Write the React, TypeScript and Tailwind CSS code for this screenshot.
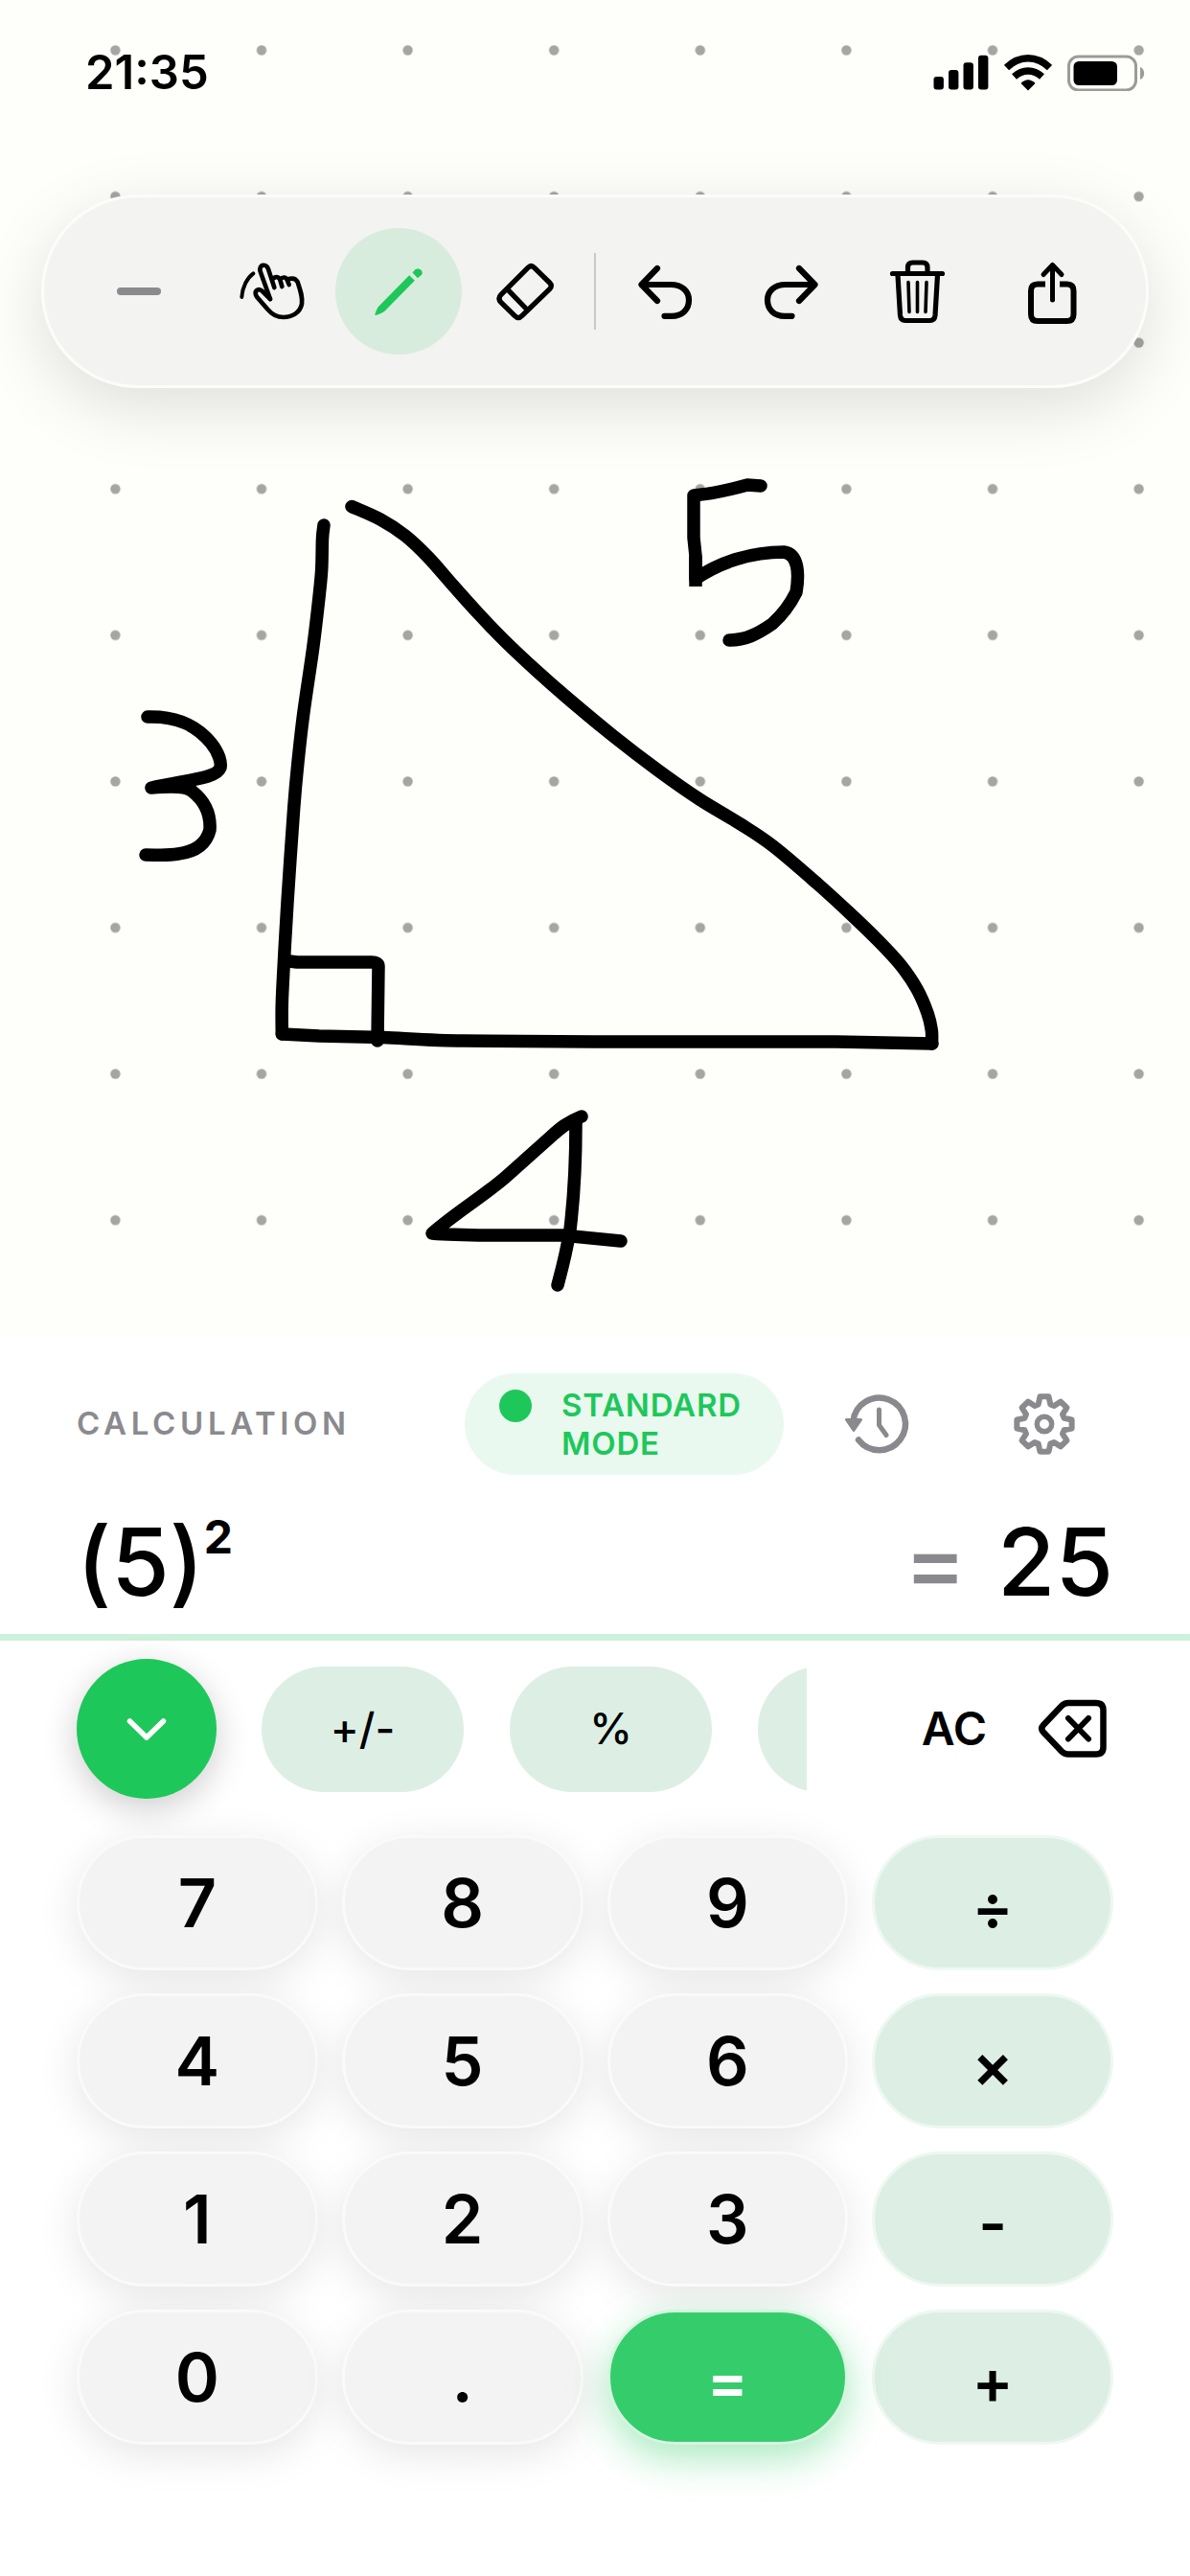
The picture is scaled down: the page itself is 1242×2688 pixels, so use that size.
import type { ReactNode } from 'react';

const GRID = 152.6;
const DOT_X = 120.4;
const DOT_Y = 52.4;

type Point = [number, number];

// Catmull-Rom spline through the sampled pen positions
function smooth(points: Point[]) {
  let d = `M${points[0][0]} ${points[0][1]}`;
  for (let i = 0; i < points.length - 1; i++) {
    const p0 = points[i - 1] ?? points[i];
    const p1 = points[i];
    const p2 = points[i + 1];
    const p3 = points[i + 2] ?? p2;
    d += `C${p1[0] + (p2[0] - p0[0]) / 6} ${p1[1] + (p2[1] - p0[1]) / 6} ${p2[0] - (p3[0] - p1[0]) / 6} ${p2[1] - (p3[1] - p1[1]) / 6} ${p2[0]} ${p2[1]}`;
  }
  return d;
}

const LEFT_SIDE: Point[] = [
  [338, 548], [336.5, 562], [335.7, 594], [333, 623], [326.7, 676], [316.7, 745], [311, 795],
  [306.7, 843], [300, 941], [296.7, 998], [294.3, 1047], [294.3, 1079],
];

const HYPOTENUSE: Point[] = [
  [367, 528.5], [397, 542], [423, 559], [447, 581.5], [473, 611], [500, 641], [527, 669], [560, 700],
  [593, 729], [640, 768], [687, 804], [730, 834], [773, 860], [807, 883], [853, 922], [887, 953],
  [917, 982], [940, 1007], [957, 1032], [968, 1057], [972.3, 1075], [972.5, 1089],
];

function Board() {
  return (
    <svg className="absolute inset-0 h-full w-full" aria-hidden="true">
      <defs>
        <pattern id="dots" x={DOT_X - GRID / 2} y={DOT_Y - GRID / 2} width={GRID} height={GRID} patternUnits="userSpaceOnUse">
          <circle cx={GRID / 2} cy={GRID / 2} r="5.2" fill="#a5a5a4" />
        </pattern>
      </defs>
      <rect width="100%" height="100%" fill="url(#dots)" />
      <g fill="none" stroke="#000" strokeWidth="13.5" strokeLinecap="round" strokeLinejoin="round">
        {/* triangle */}
        <path d={smooth(LEFT_SIDE)} />
        <path d="M294.3 1079L333 1081L400 1082.5C430 1084 455 1086 483 1086L620 1087H873L973 1089" />
        <path d={smooth(HYPOTENUSE)} />
        {/* right angle mark */}
        <path d="M302 1003L310 1004H388Q395 1004 395 1008L394 1086" />
        {/* 3 */}
        <path d="M154 748C185 747 205 757 220 775C229 786 231 796 230 801C226 812 200 813 158 822C182 820 195 820 201 826C215 837 220 850 219 866C215 882 202 889 186 891C175 893 165 892 152 892" />
        {/* 5 */}
        <path d="M794 507L780 506C762 511 745 515 724 517V561L726 580V604C752 586 785 576 818 576C834 578 834 600 831 618C824 632 815 643 806 651C790 662 778 668 761 668" />
        <path d="M726 580V612" strokeLinecap="butt" />
        {/* 4 */}
        <path d="M607 1165C592 1171 585 1177 575 1186L528 1228C505 1248 475 1266 451 1287C485 1290 520 1289 587 1289L648 1295" />
        <path d="M601 1172C601 1210 599 1250 595 1283C591 1308 586 1326 582 1341" />
      </g>
    </svg>
  );
}

function SignalIcon() {
  return (
    <svg width="58" height="38" viewBox="973 57 58 38">
      <rect x="973.5" y="80" width="10.4" height="13.5" rx="3" />
      <rect x="989" y="73" width="10.4" height="20.5" rx="3" />
      <rect x="1004.5" y="65.3" width="10.4" height="28.2" rx="3" />
      <rect x="1020" y="57.7" width="10.4" height="35.8" rx="3" />
    </svg>
  );
}

function WifiIcon() {
  return (
    <svg width="50" height="38" viewBox="1047 56 50 38" fill="none" stroke="#000" strokeWidth="7.5">
      <path d="M1049.5 69.5C1063 56.5 1081 56.5 1094.5 69.5" />
      <path d="M1057.5 79C1066.5 71 1077.5 71 1086.5 79" />
      <path d="M1064.5 86Q1072 78.5 1079.5 86L1072 93.5Z" fill="#000" stroke="none" />
    </svg>
  );
}

function BatteryIcon() {
  return (
    <svg width="81" height="38" viewBox="1114 56 81 38">
      <rect x="1115.5" y="58" width="70" height="35" rx="10" fill="none" stroke="#9b9b98" strokeWidth="3" />
      <rect x="1120.5" y="63" width="45.5" height="25" rx="5.5" />
      <path d="M1190 69C1195.5 71 1195.5 80 1190 82Z" fill="#9b9b98" />
    </svg>
  );
}

function HandIcon() {
  return (
    <svg width="74" height="64" viewBox="50 64 220 192" fill="none" stroke="#000" strokeWidth="14" strokeLinecap="round" strokeLinejoin="round">
      <path d="M65 178C67 146 82 118 101 104" strokeWidth="12" />
      <path d="M154 184L123 98C117 75 142 72 148 90L167 148" />
      <path d="M163 120C172 112 182 115 185 124L191 145M185 122C194 113 204 116 207 124L213 139" />
      <path d="M207 123C222 117 234 119 240 131C249 158 256 178 253 200C247 228 222 241 195 241C172 241 158 230 146 216L112 177C101 160 116 147 130 160L154 184" />
    </svg>
  );
}

function PencilIcon() {
  return (
    <svg width="54" height="54" viewBox="476 84 160 160" fill="#1ec75a">
      <path d="M589 114L606 131L512 226Q500 234 486 238Q482 238 483 234Q487 222 493 212Z" />
      <path d="M599 106L608 96C618 90 634 99 628 112L615 123Z" />
    </svg>
  );
}

function EraserIcon() {
  return (
    <svg width="64" height="64" viewBox="857 64 192 192" fill="none" stroke="#000" strokeWidth="16" strokeLinejoin="round">
      <path d="M962 86Q972 76 982 86L1030 133Q1040 143 1030 153L943 237Q932 248 921 237L878 195Q866 182 878 170Z" />
      <path d="M897 153L959 217" />
    </svg>
  );
}

function UndoIcon() {
  return (
    <svg width="64" height="64" viewBox="663 272 64 64" fill="none" stroke="#000" strokeWidth="6.2" strokeLinecap="round" strokeLinejoin="round">
      <path d="M687 280L670.5 297L687 314M670.5 297H701C713 297 720 304 720 313C720 323 713 329.8 702 329.8H694.5" />
    </svg>
  );
}

function RedoIcon() {
  return (
    <svg width="64" height="64" viewBox="663 272 64 64" fill="none" stroke="#000" strokeWidth="6.2" strokeLinecap="round" strokeLinejoin="round">
      <path d="M703 280L719.5 297L703 314M719.5 297H689C677 297 670 304 670 313C670 323 677 329.8 688 329.8H695.5" />
    </svg>
  );
}

function TrashIcon() {
  return (
    <svg width="64" height="72" viewBox="928 268 64 72" fill="none" stroke="#000" strokeWidth="5.2" strokeLinecap="round" strokeLinejoin="round">
      <path d="M933.5 285.5H985.5M949.5 285V279Q949.5 274 954.5 274H965Q970 274 970 279V285" />
      <path d="M939 287L941.5 329Q942 334.5 947 334.5H972.5Q977.5 334.5 978 329L980.5 287" />
      <path d="M950 294.5L951 325.5M959.5 294.5V325.5M969 294.5L968 325.5" strokeWidth="3.6" />
    </svg>
  );
}

function ShareIcon() {
  return (
    <svg width="64" height="72" viewBox="1066 268 64 72" fill="none" stroke="#000" strokeWidth="6" strokeLinejoin="round">
      <path d="M1091 296.5H1083Q1076 296.5 1076 303.5V328Q1076 335 1083 335H1113.5Q1120.5 335 1120.5 328V303.5Q1120.5 296.5 1113.5 296.5H1106" />
      <path d="M1098.5 313V277M1089 286.5L1098.5 276.5L1108 286.5" strokeWidth="5" strokeLinecap="round" />
    </svg>
  );
}

function HistoryIcon() {
  return (
    <svg width="72" height="72" viewBox="882 1451 72 72" fill="none" stroke="#8a8a8e" strokeWidth="6.5" strokeLinecap="round">
      <path d="M896 1503.5A27.3 27.3 0 1 0 890.5 1484" />
      <path d="M917.5 1472V1488L925 1498.5" strokeWidth="5" strokeLinejoin="round" />
      <path d="M883.5 1482.5H898.5L891 1493.5Z" fill="#8a8a8e" strokeWidth="3" strokeLinejoin="round" />
    </svg>
  );
}

// outline of an eight-tooth wheel round the origin
const GEAR = Array.from({ length: 8 }, (_, k) =>
  [
    [-17, 21.5],
    [-9, 29],
    [9, 29],
    [17, 21.5],
  ].map(([deg, r]) => {
    const a = ((k * 45 + deg - 90) * Math.PI) / 180;
    return `${(Math.cos(a) * r).toFixed(2)},${(Math.sin(a) * r).toFixed(2)}`;
  }),
)
  .flat()
  .join(' ');

function GearIcon() {
  return (
    <svg width="72" height="72" viewBox="-36 -36 72 72" fill="none" stroke="#8a8a8e" strokeWidth="6" strokeLinejoin="round">
      <polygon points={GEAR} />
      <circle r="7.7" strokeWidth="5.5" />
    </svg>
  );
}

function ChevronIcon() {
  return (
    <svg width="48" height="32" viewBox="129 1788 48 32" fill="none" stroke="#fff" strokeWidth="5.5" strokeLinecap="round" strokeLinejoin="round">
      <path d="M135.5 1796L153 1813L170.5 1796" />
    </svg>
  );
}

function BackspaceIcon() {
  return (
    <svg width="76" height="64" viewBox="1082 1772 76 64" fill="none" stroke="#000" strokeWidth="6.5" strokeLinecap="round" strokeLinejoin="round">
      <path d="M1115 1777H1144Q1151.5 1777 1151.5 1784.5V1823Q1151.5 1830.5 1144 1830.5H1115Q1111 1830.5 1108 1827.5L1089 1807.5Q1085.5 1803.7 1089 1800L1108 1780Q1111 1777 1115 1777" />
      <path d="M1115 1793L1136 1814.5M1136 1793L1115 1814.5" strokeWidth="6" />
    </svg>
  );
}

function Tool({ label, children, edge, active }: { label: string; children: ReactNode; edge?: boolean; active?: boolean }) {
  const width = edge ? 'flex-1' : 'w-[132px]';
  const tone = active ? 'bg-[#d8ecde]' : '';
  return (
    <button type="button" aria-label={label} className={`grid h-[132px] place-items-center rounded-full ${width} ${tone}`}>
      {children}
    </button>
  );
}

function Toolbar() {
  return (
    <div className="relative mx-[43px] mt-[51px] flex h-[202px] items-center rounded-full border-[3px] border-[#fcfcfb] bg-[#f3f3f1] px-[25px] shadow-[0_20px_70px_rgba(0,0,0,0.13)]">
      <Tool label="Collapse" edge>
        <span className="h-2 w-[46px] rounded-full bg-[#8a8a8e]" />
      </Tool>
      <Tool label="Move"><HandIcon /></Tool>
      <Tool label="Pen" active><PencilIcon /></Tool>
      <Tool label="Eraser"><EraserIcon /></Tool>
      <span className="mx-[6px] h-20 w-[2px] bg-[#c9c9c8]" />
      <Tool label="Undo"><UndoIcon /></Tool>
      <Tool label="Redo"><RedoIcon /></Tool>
      <Tool label="Clear"><TrashIcon /></Tool>
      <Tool label="Share" edge><ShareIcon /></Tool>
    </div>
  );
}

const KEYS = ['7', '8', '9', '÷', '4', '5', '6', '×', '1', '2', '3', '-', '0', '.', '=', '+'];

const KEY_TONE = {
  digit: 'border-[#fafafa] bg-[#f3f3f3] text-[70px] shadow-[0_10px_44px_rgba(0,0,0,0.1)]',
  operator: 'border-[#eef8f2] bg-[#ddefe4] pt-2 text-[64px]',
  equals: 'relative border-[#d5f5e1] bg-[#35cd6b] pt-2 text-[64px] text-white shadow-[0_14px_40px_rgba(30,199,90,0.38)]',
};

function Key({ value }: { value: string }) {
  const kind = value === '=' ? 'equals' : '÷×-+'.includes(value) ? 'operator' : 'digit';
  return (
    <button type="button" className={`grid h-[141px] place-items-center rounded-full border-[3px] leading-none font-semibold ${KEY_TONE[kind]}`}>
      {value}
    </button>
  );
}

function FunctionKey({ label, children }: { label: string; children?: ReactNode }) {
  return (
    <button type="button" aria-label={label} className="h-[131px] w-[211px] shrink-0 rounded-full bg-[#ddefe4] text-[45px] font-medium">
      {children}
    </button>
  );
}

export default function App() {
  return (
    <div className="min-h-screen bg-white font-[Inter,'Liberation_Sans',sans-serif] text-black">
      <section className="relative h-[1393px] overflow-hidden bg-[#fefffa]">
        <Board />
        <header className="relative flex h-[152px] items-center justify-between pr-[47px] pl-[89px]">
          <time className="text-[49px] font-semibold">21:35</time>
          <div className="flex items-center gap-4">
            <SignalIcon />
            <WifiIcon />
            <BatteryIcon />
          </div>
        </header>
        <Toolbar />
      </section>

      <section className="border-b-[7px] border-[#cdf1da] px-20 pt-10 pb-4">
        <div className="flex items-center gap-7">
          <h1 className="mr-auto text-[33px] font-semibold tracking-[0.14em] text-[#8a8a8e]">CALCULATION</h1>
          <button type="button" className="flex w-[333px] items-start gap-[31px] rounded-full bg-[#e9f9ef] py-[13px] pl-9 text-left text-[33px] leading-10 font-semibold tracking-wide text-[#1ec75a]">
            <span className="mt-1 size-[34px] shrink-0 rounded-full bg-[#1ec75a]" />
            <span>STANDARD MODE</span>
          </button>
          <button type="button" aria-label="History" className="grid h-[106px] w-36 place-items-center"><HistoryIcon /></button>
          <button type="button" aria-label="Settings" className="grid h-[106px] w-36 place-items-center"><GearIcon /></button>
        </div>
        <div className="mt-8 flex justify-between text-[98px] leading-[118px] font-medium">
          <div className="flex items-start [font-feature-settings:'calt'_0]">
            <span>(5)</span>
            <sup className="top-0 text-[48px] leading-[66px] font-bold">2</sup>
          </div>
          <output className="flex gap-8">
            <span className="text-[#8a8a8e]">=</span>
            <span>25</span>
          </output>
        </div>
      </section>

      <section className="px-20 pt-[19px] pb-10">
        <div className="flex items-center">
          <button type="button" aria-label="Hide keypad" className="grid size-[146px] shrink-0 place-items-center rounded-full bg-[#1ec75a] shadow-[0_10px_36px_rgba(0,0,0,0.2)]">
            <ChevronIcon />
          </button>
          <div className="ml-[47px] flex min-w-0 flex-1 gap-12 overflow-hidden">
            <FunctionKey label="Change sign">+/-</FunctionKey>
            <FunctionKey label="Percent">%</FunctionKey>
            <FunctionKey label="More" />
          </div>
          <button type="button" className="ml-[72px] w-[164px] text-[48px] font-semibold">AC</button>
          <button type="button" aria-label="Delete" className="grid h-[131px] w-[84px] place-items-center"><BackspaceIcon /></button>
        </div>
        <div className="mt-[38px] grid grid-cols-4 gap-x-[25px] gap-y-6">
          {KEYS.map((k) => (
            <Key key={k} value={k} />
          ))}
        </div>
      </section>
    </div>
  );
}
